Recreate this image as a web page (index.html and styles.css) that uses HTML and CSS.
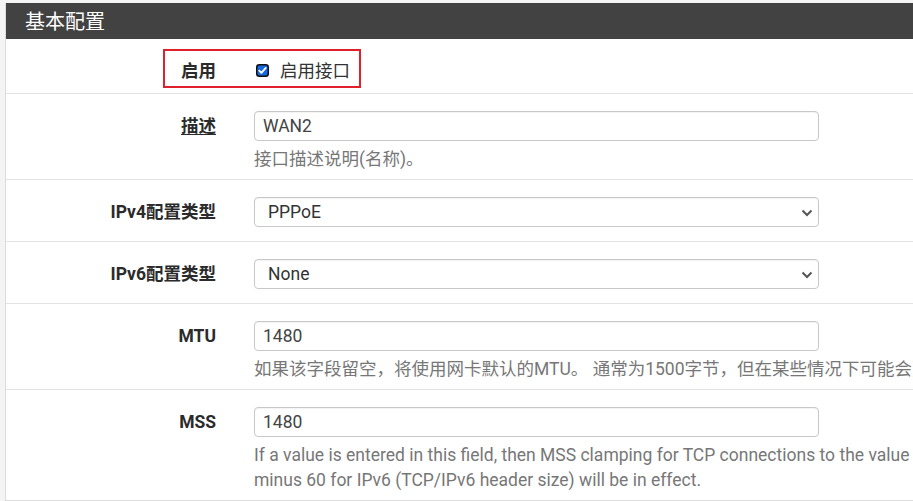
FILE: index.html
```html
<!DOCTYPE html>
<html lang="zh-CN">
<head>
<meta charset="utf-8">
<title>基本配置</title>
<link rel="stylesheet" href="styles.css">
</head>
<body>
<div class="panel">
  <div class="panel-heading">基本配置</div>
  <div class="row row-check">
    <div class="label">启用</div>
    <div class="field check-field">
      <span class="checkbox" role="checkbox" aria-checked="true">
        <svg width="13" height="13" viewBox="0 0 13 13"><rect x="0.75" y="0.75" width="11.5" height="11.5" rx="2.5" fill="#1769e0" stroke="#111" stroke-width="1.5"/><path d="M3.2 6.6 L5.4 8.8 L9.8 3.9" fill="none" stroke="#fff" stroke-width="1.8" stroke-linecap="round" stroke-linejoin="round"/></svg>
      </span>
      <span class="check-text">启用接口</span>
    </div>
    <div class="highlight"></div>
  </div>
  <div class="row">
    <div class="label"><span class="underline">描述</span></div>
    <div class="field">
      <div class="input">WAN2</div>
      <div class="help">接口描述说明(名称)。</div>
    </div>
  </div>
  <div class="row">
    <div class="label">IPv4配置类型</div>
    <div class="field">
      <div class="input select">PPPoE
        <svg class="chev" width="12" height="8" viewBox="0 0 12 8"><path d="M1.5 1.5 L6 6 L10.5 1.5" fill="none" stroke="#555" stroke-width="2"/></svg>
      </div>
    </div>
  </div>
  <div class="row">
    <div class="label">IPv6配置类型</div>
    <div class="field">
      <div class="input select">None
        <svg class="chev" width="12" height="8" viewBox="0 0 12 8"><path d="M1.5 1.5 L6 6 L10.5 1.5" fill="none" stroke="#555" stroke-width="2"/></svg>
      </div>
    </div>
  </div>
  <div class="row">
    <div class="label">MTU</div>
    <div class="field">
      <div class="input">1480</div>
      <div class="help nowrap">如果该字段留空，将使用网卡默认的MTU。 通常为1500字节，但在某些情况下可能会更小。</div>
    </div>
  </div>
  <div class="row">
    <div class="label">MSS</div>
    <div class="field">
      <div class="input">1480</div>
      <div class="help nowrap">If a value is entered in this field, then MSS clamping for TCP connections to the value above minus 40 for IPv4 (TCP/IPv4 header size) and<br>minus 60 for IPv6 (TCP/IPv6 header size) will be in effect.</div>
    </div>
  </div>
</div>
</body>
</html>
```
FILE: styles.css
```css
html, body {
  margin: 0;
  padding: 0;
  overflow: hidden;
}
body {
  background: #f4f4f4;
  padding: 3px 0 0 5px;
  font-family: Roboto, "Noto Sans CJK SC", sans-serif;
  font-size: 17.5px;
  line-height: 25px;
  color: #333;
}
.panel {
  width: 1200px;
  background: #fff;
  border: 1px solid #dcdcdc;
  border-top: none;
}
.panel-heading {
  height: 36px;
  line-height: 36px;
  background: #424242;
  color: #fff;
  font-size: 20px;
  padding-left: 19px;
  font-family: "Noto Sans CJK SC", sans-serif;
}
.row {
  position: relative;
  display: grid;
  grid-template-columns: 210px 1fr;
  column-gap: 38px;
  padding: 17px 0 14px;
  border-bottom: 1px solid #e3e3e3;
}
.row:last-child {
  border-bottom: none;
}
.row-check {
  padding: 17px 0 7px;
}
.label {
  text-align: right;
  font-weight: bold;
  line-height: 30px;
  color: #2b2b2b;
}
.underline {
  text-decoration: underline;
  text-underline-offset: 2px;
}
.field {
  min-width: 0;
}
.check-field {
  display: flex;
  align-items: center;
  height: 30px;
}
.checkbox {
  display: flex;
  margin-left: 2px;
  margin-top: -1px;
}
.check-text {
  margin-left: 11px;
  color: #333;
}
.highlight {
  position: absolute;
  left: 157px;
  top: 10px;
  width: 194px;
  height: 35px;
  border: 2px solid #e0202a;
}
.input {
  position: relative;
  box-sizing: border-box;
  width: 565px;
  height: 30px;
  line-height: 28px;
  border: 1px solid #c8c8c8;
  border-radius: 4px;
  padding-left: 8px;
  color: #444;
  box-shadow: inset 0 1px 1px rgba(0,0,0,0.05);
}
.select {
  padding-left: 13px;
  color: #333;
}
.chev {
  position: absolute;
  right: 5px;
  top: 11px;
}
.help {
  margin: 6px 0 -7px;
  color: #777;
}
.nowrap {
  white-space: nowrap;
}
```
